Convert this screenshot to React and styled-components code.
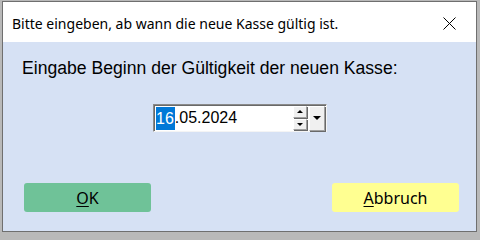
import React from 'react';
import styled, { createGlobalStyle } from 'styled-components';

const GlobalStyle = createGlobalStyle`
  html, body {
    margin: 0;
    padding: 0;
    background: #b9b9b9;
  }
  body {
    width: 480px;
    height: 234px;
    overflow: hidden;
  }
`;

// Dialogfenster mit Rahmen
const Window = styled.div`
  box-sizing: border-box;
  margin: 1px 0 0 2px;
  width: 475px;
  height: 231px;
  border: 1px solid #6f6f6f;
  display: flex;
  flex-direction: column;
  background: #d6e1f4;
`;

const TitleBar = styled.div`
  height: 40px;
  flex: none;
  background: #ffffff;
  display: flex;
  align-items: center;
  justify-content: space-between;
  padding: 2px 0 0 9px;
  box-sizing: border-box;
`;

const Title = styled.span`
  font-family: "Noto Sans", "Open Sans", sans-serif;
  font-size: 14px;
  color: #000;
`;

const CloseButton = styled.div`
  width: 46px;
  height: 38px;
  display: flex;
  align-items: center;
  justify-content: center;
  margin-right: 4px;
`;

const Body = styled.div`
  flex: 1;
  display: flex;
  flex-direction: column;
  padding: 16px 17px 0 19px;
`;

const Prompt = styled.div`
  font-family: "Liberation Sans", Arial, sans-serif;
  font-size: 17.6px;
  color: #000;
  line-height: 20px;
`;

const FieldRow = styled.div`
  display: flex;
  justify-content: flex-start;
  padding-left: 131px;
  margin-top: 26px;
`;

const DateBox = styled.div`
  box-sizing: border-box;
  width: 174px;
  height: 28px;
  background: #fff;
  border: 1px solid;
  border-color: #8a8a8a #f4f4f4 #f4f4f4 #8a8a8a;
  box-shadow: inset 1px 1px 0 #696969;
  display: flex;
  align-items: center;
  padding: 1px 1px 1px 2px;
`;

const DateText = styled.div`
  flex: 1;
  font-family: "Liberation Sans", Arial, sans-serif;
  font-size: 16px;
  color: #000;
  display: flex;
  align-items: center;
  height: 23px;
`;

const Selected = styled.span`
  background: #0078d7;
  color: #fff;
  height: 23px;
  line-height: 23px;
  padding-right: 1px;
`;

const SpinColumn = styled.div`
  display: flex;
  flex-direction: column;
  gap: 1px;
  width: 15px;
  height: 25px;
  margin-right: 1px;
`;

const Bevel = styled.div`
  box-sizing: border-box;
  background: #f0f0f0;
  border: 1px solid;
  border-color: #ffffff #a0a0a0 #a0a0a0 #ffffff;
  box-shadow: 1px 1px 0 #696969;
  display: flex;
  align-items: center;
  justify-content: center;
  width: ${p => p.$w}px;
  height: ${p => p.$h}px;
`;

const Arrow = styled.div`
  width: 0;
  height: 0;
  border-left: ${p => p.$s}px solid transparent;
  border-right: ${p => p.$s}px solid transparent;
  ${p => (p.$up ? `border-bottom: ${p.$s}px solid #000;` : `border-top: ${p.$s}px solid #000;`)}
`;

const ButtonRow = styled.div`
  display: flex;
  justify-content: space-between;
  margin-top: auto;
  margin-bottom: 19px;
  padding-left: 2px;
`;

const DialogButton = styled.button`
  box-sizing: border-box;
  width: 127px;
  height: 29px;
  border: none;
  border-radius: 3px;
  background: ${p => p.$bg};
  font-family: "Noto Sans", "Open Sans", sans-serif;
  font-size: 16px;
  color: #000;
  padding: 0;
  cursor: pointer;

  u {
    text-decoration-thickness: 1px;
    text-underline-offset: 2px;
  }
`;

export default function App() {
  return (
    <>
      <GlobalStyle />
      <Window>
        <TitleBar>
          <Title>Bitte eingeben, ab wann die neue Kasse gültig ist.</Title>
          <CloseButton>
            <svg width="13" height="13" viewBox="0 0 13 13">
              <path d="M0.5 0.5 L12.5 12.5 M12.5 0.5 L0.5 12.5" stroke="#000" strokeWidth="1" fill="none" />
            </svg>
          </CloseButton>
        </TitleBar>
        <Body>
          <Prompt>Eingabe Beginn der Gültigkeit der neuen Kasse:</Prompt>
          <FieldRow>
            <DateBox>
              <DateText>
                <Selected>16</Selected>.05.2024
              </DateText>
              <SpinColumn>
                <Bevel $w={14} $h={12}><Arrow $up $s={3} /></Bevel>
                <Bevel $w={14} $h={11}><Arrow $s={3} /></Bevel>
              </SpinColumn>
              <Bevel $w={16} $h={25}><Arrow $s={4} /></Bevel>
            </DateBox>
          </FieldRow>
          <ButtonRow>
            <DialogButton $bg="#6fc298"><u>O</u>K</DialogButton>
            <DialogButton $bg="#ffff91"><u>A</u>bbruch</DialogButton>
          </ButtonRow>
        </Body>
      </Window>
    </>
  );
}
